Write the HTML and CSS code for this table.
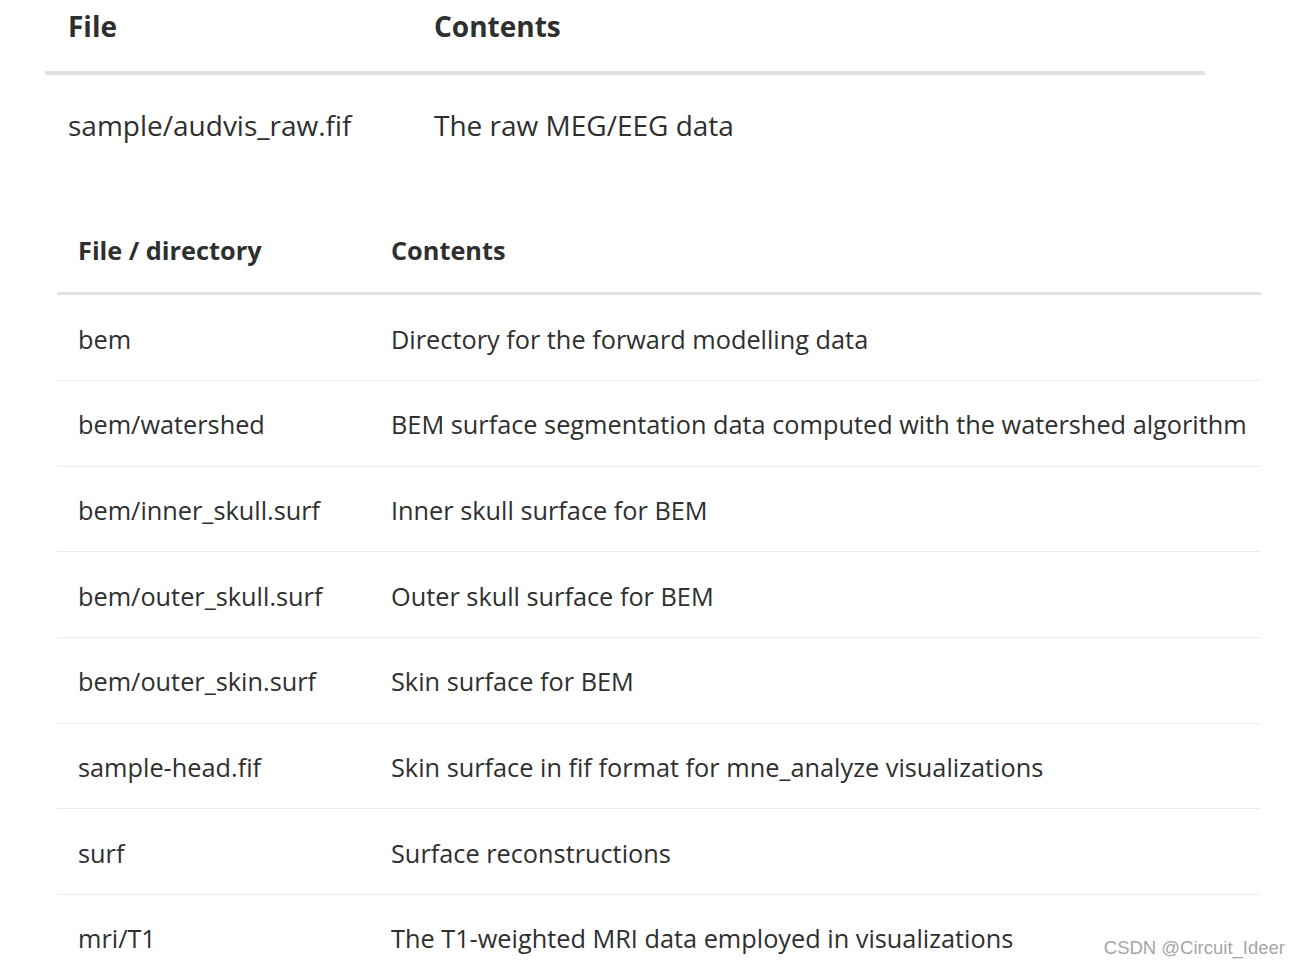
FILE: index.html
```html
<!DOCTYPE html>
<html lang="en">
<head>
<meta charset="utf-8">
<title>MNE sample data</title>
<link rel="stylesheet" href="styles.css">
</head>
<body>
<div class="page">
  <table class="t1">
    <thead>
      <tr><th class="c1">File</th><th class="c2">Contents</th></tr>
    </thead>
    <tbody>
      <tr><td class="c1">sample/audvis_raw.fif</td><td class="c2">The raw MEG/EEG data</td></tr>
    </tbody>
  </table>

  <table class="t2">
    <thead>
      <tr><th class="c1">File / directory</th><th class="c2">Contents</th></tr>
    </thead>
    <tbody>
      <tr><td class="c1">bem</td><td class="c2">Directory for the forward modelling data</td></tr>
      <tr><td class="c1">bem/watershed</td><td class="c2">BEM surface segmentation data computed with the watershed algorithm</td></tr>
      <tr><td class="c1">bem/inner_skull.surf</td><td class="c2">Inner skull surface for BEM</td></tr>
      <tr><td class="c1">bem/outer_skull.surf</td><td class="c2">Outer skull surface for BEM</td></tr>
      <tr><td class="c1">bem/outer_skin.surf</td><td class="c2">Skin surface for BEM</td></tr>
      <tr><td class="c1">sample-head.fif</td><td class="c2">Skin surface in fif format for mne_analyze visualizations</td></tr>
      <tr><td class="c1">surf</td><td class="c2">Surface reconstructions</td></tr>
      <tr><td class="c1">mri/T1</td><td class="c2">The T1-weighted MRI data employed in visualizations</td></tr>
    </tbody>
  </table>
</div>
<div class="watermark">CSDN @Circuit_Ideer</div>
</body>
</html>
```

FILE: styles.css
```css
html, body {
  margin: 0;
  padding: 0;
  background: #ffffff;
}

body {
  width: 1301px;
  height: 967px;
  overflow: hidden;
  position: relative;
  font-family: "Open Sans", "Noto Sans", sans-serif;
  color: #2f2f2f;
}

.page {
  display: flex;
  flex-direction: column;
}

table {
  border-collapse: collapse;
  border-spacing: 0;
  table-layout: fixed;
}

th, td {
  box-sizing: border-box;
  text-align: left;
  vertical-align: middle;
  white-space: nowrap;
}

th {
  font-weight: 700;
}

td {
  font-weight: 400;
}

/* first table */
.t1 {
  margin-left: 45px;
  width: 1160px;
  font-size: 28px;
}

.t1 .c1 {
  width: 366px;
}

.t1 th {
  height: 73px;
  padding: 0 0 20px 23px;
  border-bottom: 4px solid #dfe2e5;
}

.t1 td {
  height: 104px;
  padding: 0 0 3px 23px;
}

/* second table */
.t2 {
  margin-top: 32px;
  margin-left: 57px;
  width: 1204px;
  font-size: 25.3px;
}

.t2 .c1 {
  width: 313px;
}

.t2 th {
  height: 84px;
  padding: 0 0 0 21px;
  border-bottom: 3px solid #dfe2e5;
}

.t2 td {
  height: 85.67px;
  padding: 2px 0 0 21px;
  border-bottom: 1px solid #eaecef;
}

.t2 tbody tr:first-child td {
  height: 87.6px;
  padding-top: 4px;
}

.watermark {
  position: absolute;
  right: 16px;
  bottom: 8px;
  font-family: "Liberation Sans", Arial, sans-serif;
  font-size: 18.5px;
  color: #a6a6a6;
}
```
